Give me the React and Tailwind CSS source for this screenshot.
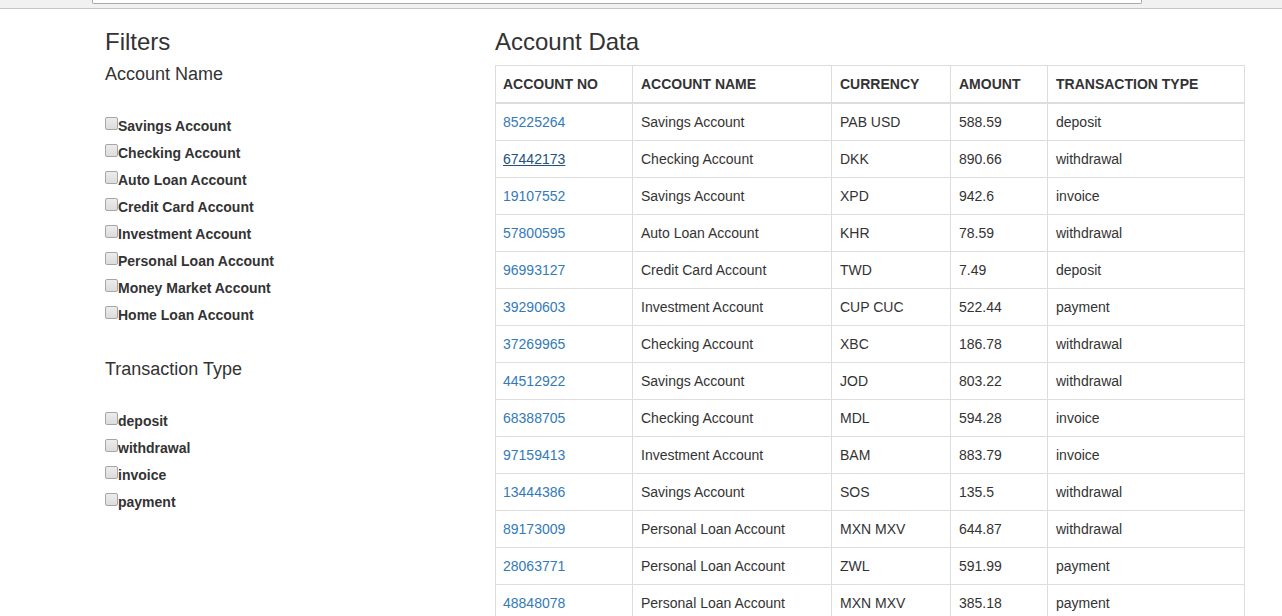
import React from "react";

const accountNames = [
  "Savings Account",
  "Checking Account",
  "Auto Loan Account",
  "Credit Card Account",
  "Investment Account",
  "Personal Loan Account",
  "Money Market Account",
  "Home Loan Account",
];
const txTypes = ["deposit", "withdrawal", "invoice", "payment"];

const rows = [
  ["85225264", "Savings Account", "PAB USD", "588.59", "deposit"],
  ["67442173", "Checking Account", "DKK", "890.66", "withdrawal"],
  ["19107552", "Savings Account", "XPD", "942.6", "invoice"],
  ["57800595", "Auto Loan Account", "KHR", "78.59", "withdrawal"],
  ["96993127", "Credit Card Account", "TWD", "7.49", "deposit"],
  ["39290603", "Investment Account", "CUP CUC", "522.44", "payment"],
  ["37269965", "Checking Account", "XBC", "186.78", "withdrawal"],
  ["44512922", "Savings Account", "JOD", "803.22", "withdrawal"],
  ["68388705", "Checking Account", "MDL", "594.28", "invoice"],
  ["97159413", "Investment Account", "BAM", "883.79", "invoice"],
  ["13444386", "Savings Account", "SOS", "135.5", "withdrawal"],
  ["89173009", "Personal Loan Account", "MXN MXV", "644.87", "withdrawal"],
  ["28063771", "Personal Loan Account", "ZWL", "591.99", "payment"],
  ["48848078", "Personal Loan Account", "MXN MXV", "385.18", "payment"],
];

function Check({ label }) {
  return (
    <label className="flex items-start h-[27px] pt-[5px] text-[14px] leading-[20px] font-bold text-[#333]">
      <span className="mt-[1px] w-[13px] h-[13px] shrink-0 rounded-[2px] border border-[#a6a6a6] bg-[linear-gradient(#ececec,#dcdcdc)]" />
      <span>{label}</span>
    </label>
  );
}

export default function App() {
  return (
    <div
      className="min-h-[616px] bg-white text-[#333] overflow-hidden"
      style={{ fontFamily: '"Liberation Sans", Arial, sans-serif' }}
    >
      <div className="h-[9px] bg-[#f1f1f1] border-b border-[#c4c4c4] relative">
        <div className="absolute left-[92px] top-0 w-[1050px] h-[4px] bg-white border border-t-0 border-[#a9a9a9] rounded-b-[2px]" />
      </div>
      <div className="flex pl-[105px]">
        <div className="w-[390px]">
          <h3 className="mt-[20px] text-[24px] leading-[26px] font-normal text-[#333]">Filters</h3>
          <h4 className="mt-[9px] text-[18px] leading-[20px] font-normal text-[#333]">Account Name</h4>
          <div className="mt-[27px]">
            {accountNames.map((n) => (
              <Check key={n} label={n} />
            ))}
          </div>
          <h4 className="mt-[32px] text-[18px] leading-[20px] font-normal text-[#333]">Transaction Type</h4>
          <div className="mt-[27px]">
            {txTypes.map((n) => (
              <Check key={n} label={n} />
            ))}
          </div>
        </div>
        <div className="w-[750px]">
          <h3 className="mt-[20px] text-[24px] leading-[26px] font-normal text-[#333]">Account Data</h3>
          <table className="mt-[10px] w-[750px] table-fixed border-collapse border border-[#ddd] text-[14px] leading-[20px]">
            <thead>
              <tr>
                <th className="w-[137px] py-[8px] pl-[7px] pr-[8px] text-left font-bold border border-[#ddd] border-b-2">ACCOUNT NO</th>
                <th className="w-[199px] p-[8px] text-left font-bold border border-[#ddd] border-b-2">ACCOUNT NAME</th>
                <th className="w-[119px] p-[8px] text-left font-bold border border-[#ddd] border-b-2">CURRENCY</th>
                <th className="w-[97px] p-[8px] text-left font-bold border border-[#ddd] border-b-2">AMOUNT</th>
                <th className="p-[8px] text-left font-bold border border-[#ddd] border-b-2">TRANSACTION TYPE</th>
              </tr>
            </thead>
            <tbody>
              {rows.map((r, i) => (
                <tr key={r[0]}>
                  <td className="py-[8px] pl-[7px] pr-[8px] border border-[#ddd]">
                    <a
                      href="#"
                      className={i === 1 ? "text-[#23527c] underline" : "text-[#337ab7] no-underline"}
                    >
                      {r[0]}
                    </a>
                  </td>
                  <td className="p-[8px] border border-[#ddd]">{r[1]}</td>
                  <td className="p-[8px] border border-[#ddd]">{r[2]}</td>
                  <td className="p-[8px] border border-[#ddd]">{r[3]}</td>
                  <td className="p-[8px] border border-[#ddd]">{r[4]}</td>
                </tr>
              ))}
            </tbody>
          </table>
        </div>
      </div>
    </div>
  );
}
